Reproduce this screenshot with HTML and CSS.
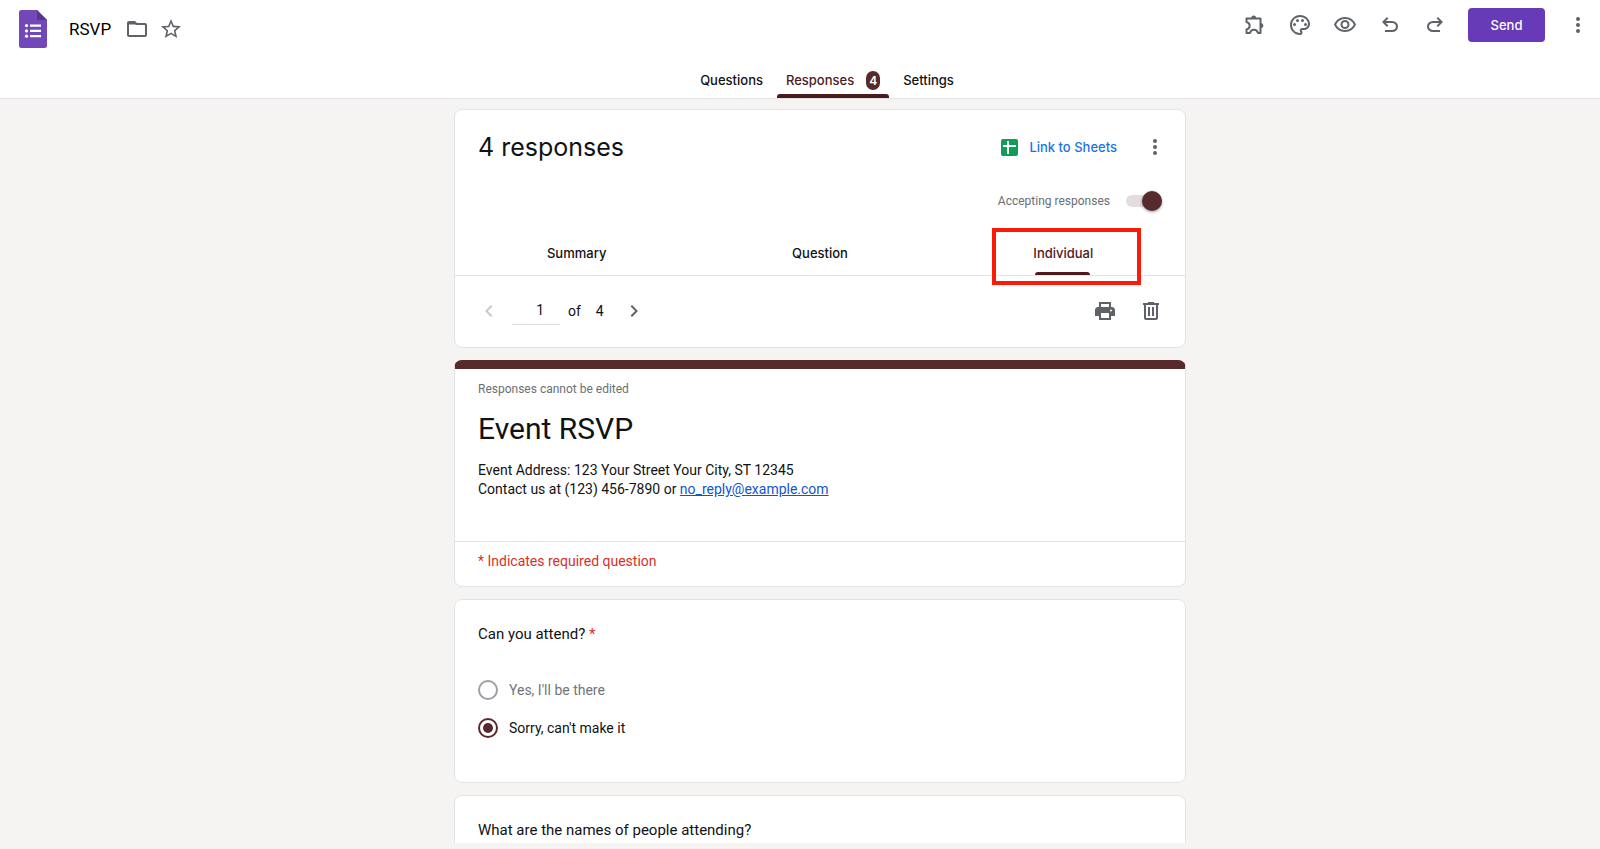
FILE: index.html
```html
<!DOCTYPE html>
<html lang="en">
<head>
<meta charset="utf-8">
<title>RSVP - Forms</title>
<link rel="stylesheet" href="styles.css">
</head>
<body>
<header class="topbar">
  <div class="topbar-row">
    <div class="file">
      <svg class="logo" viewBox="0 0 28 38" aria-hidden="true">
        <path fill="#7248b9" d="M2.500 0H18L28 10V35.500a2.500 2.500 0 0 1-2.500 2.500h-23A2.500 2.500 0 0 1 0 35.500v-33A2.500 2.500 0 0 1 2.500 0z"/>
        <path fill="#58358f" d="M18 0l10 10H18z"/>
        <path fill="#fff" d="M11 14.500h11v2.300H11zM11 19.800h11v2.300H11zM11 25h11v2.300H11z"/>
        <g fill="#fff"><circle cx="7.500" cy="15.600" r="1.600"/><circle cx="7.500" cy="20.900" r="1.600"/><circle cx="7.500" cy="26.200" r="1.600"/></g>
      </svg>
      <h1 class="file-name">RSVP</h1>
      <button class="icon-btn" aria-label="Move to folder"><svg class="icon" viewBox="0 0 24 24"><path d="M9.170 6l2 2H20v10H4V6h5.170M10 4H4c-1.100 0-1.990.900-1.990 2L2 18c0 1.100.900 2 2 2h16c1.100 0 2-.900 2-2V8c0-1.100-.900-2-2-2h-8l-2-2z"/><path d="M4 5h6l2 2.500H4z"/></svg></button>
      <button class="icon-btn" aria-label="Star"><svg class="icon" viewBox="0 0 24 24"><path d="M22 9.240l-7.190-.620L12 2 9.190 8.630 2 9.240l5.460 4.730L5.820 21 12 17.270 18.180 21l-1.630-7.030L22 9.240zM12 15.400l-3.760 2.270 1-4.280-3.320-2.880 4.380-.380L12 6.100l1.710 4.040 4.380.380-3.320 2.880 1 4.280L12 15.400z"/></svg></button>
    </div>
    <div class="actions">
      <button class="icon-btn" aria-label="Add-ons"><svg class="icon" viewBox="0 0 24 24"><path class="line" d="M4 5.500H17.500V20H15C14.500 18 13 16.800 11 16.800S7.500 18 7 20H3.500V16.500C5.500 16 6.700 14.700 6.700 12.700S5.500 9.500 3.500 9V5.500z"/><path d="M8.300 5a2.400 2.400 0 0 1 4.800 0zM18 10.300a2.400 2.400 0 0 1 0 4.800z"/></svg></button>
      <button class="icon-btn" aria-label="Customize theme"><svg class="icon mirrored" viewBox="0 0 24 24"><g transform="matrix(-1 0 0 1 24 0)"><path d="M12 22C6.490 22 2 17.510 2 12S6.490 2 12 2s10 4.040 10 9c0 3.310-2.690 6-6 6h-1.770c-.280 0-.500.220-.500.500 0 .120.050.230.130.330.410.470.640 1.060.640 1.670A2.500 2.500 0 0 1 12 22zm0-18c-4.410 0-8 3.590-8 8s3.590 8 8 8c.280 0 .500-.220.500-.500a.540.540 0 0 0-.140-.350c-.410-.460-.630-1.050-.630-1.650a2.500 2.500 0 0 1 2.500-2.500H16c2.210 0 4-1.790 4-4 0-3.860-3.590-7-8-7z"/><circle cx="6.500" cy="11.500" r="1.500"/><circle cx="9.500" cy="7.500" r="1.500"/><circle cx="14.500" cy="7.500" r="1.500"/><circle cx="17.500" cy="11.500" r="1.500"/></g></svg></button>
      <button class="icon-btn" aria-label="Preview"><svg class="icon" viewBox="0 0 24 24"><path d="M12 6a9.770 9.770 0 0 1 8.820 5.500C19.170 14.870 15.790 17 12 17s-7.170-2.130-8.820-5.500A9.770 9.770 0 0 1 12 6m0-2C7 4 2.730 7.110 1 11.500 2.730 15.890 7 19 12 19s9.270-3.110 11-7.500C21.270 7.110 17 4 12 4z"/><circle class="line" cx="12" cy="11.500" r="3.500"/></svg></button>
      <button class="icon-btn" aria-label="Undo"><svg class="icon" viewBox="0 0 24 24"><path d="M7 19v-2h7.100q1.575 0 2.738-1T18 13.500 16.838 11 14.100 10H7.800l2.600 2.600L9 14 4 9l5-5 1.400 1.400L7.800 8h6.300q2.425 0 4.163 1.575T20 13.500t-1.737 3.925T14.100 19z"/></svg></button>
      <button class="icon-btn" aria-label="Redo"><svg class="icon mirrored" viewBox="0 0 24 24"><path d="M7 19v-2h7.100q1.575 0 2.738-1T18 13.500 16.838 11 14.100 10H7.800l2.600 2.600L9 14 4 9l5-5 1.400 1.400L7.800 8h6.300q2.425 0 4.163 1.575T20 13.500t-1.737 3.925T14.100 19z"/></svg></button>
      <button class="send">Send</button>
      <button class="icon-btn" aria-label="More"><svg class="icon" viewBox="0 0 24 24"><circle cx="12" cy="6" r="2"/><circle cx="12" cy="12" r="2"/><circle cx="12" cy="18" r="2"/></svg></button>
    </div>
  </div>
  <nav class="tabs">
    <button class="tab">Questions</button>
    <button class="tab tab-active">Responses <span class="badge">4</span></button>
    <button class="tab">Settings</button>
  </nav>
</header>
<main class="page">
  <section class="card summary">
    <div class="summary-head">
      <h2 class="count">4 responses</h2>
      <div class="summary-actions">
        <button class="sheets"><svg class="sheets-icon" viewBox="0 0 17 17" aria-hidden="true"><rect width="17" height="17" rx="2" fill="#0f9d58"/><path fill="#fff" d="M2 6h4V2h2v4h7v2H8v7H6V8H2z"/></svg>Link to Sheets</button>
        <button class="icon-btn" aria-label="Response options"><svg class="icon" viewBox="0 0 24 24"><circle cx="12" cy="6" r="2"/><circle cx="12" cy="12" r="2"/><circle cx="12" cy="18" r="2"/></svg></button>
      </div>
    </div>
    <label class="accepting">Accepting responses <input class="switch" type="checkbox" role="switch" checked></label>
    <nav class="views">
      <button class="view">Summary</button>
      <button class="view">Question</button>
      <button class="view view-active">Individual<span class="highlight"></span></button>
    </nav>
    <div class="pager">
      <button class="icon-btn" aria-label="Previous response" disabled><svg class="icon faint" viewBox="0 0 24 24"><path d="M15.400 7.400L14 6l-6 6 6 6 1.400-1.400L10.800 12z"/></svg></button>
      <input class="page-input" type="text" value="1" aria-label="Response number">
      <span class="of">of</span><span>4</span>
      <button class="icon-btn next" aria-label="Next response"><svg class="icon mirrored" viewBox="0 0 24 24"><path d="M15.400 7.400L14 6l-6 6 6 6 1.400-1.400L10.800 12z"/></svg></button>
      <div class="pager-tools">
        <button class="icon-btn" aria-label="Print"><svg class="icon" viewBox="0 0 24 24"><path fill-rule="evenodd" d="M18 8V3H6v5H5c-1.660 0-3 1.340-3 3v6h4v4h12v-4h4v-6c0-1.660-1.340-3-3-3zM8 5h8v3H8zm8 14H8v-5h8zm2-6.500a1 1 0 1 1 0-2 1 1 0 0 1 0 2z"/></svg></button>
        <button class="icon-btn" aria-label="Delete"><svg class="icon" viewBox="0 0 24 24"><path fill-rule="evenodd" d="M15 4V3H9v1H4v2h1v13c0 1.100.900 2 2 2h10c1.100 0 2-.900 2-2V6h1V4zm2 15H7V6h10zM9 8h2v9H9zm4 0h2v9h-2z"/></svg></button>
      </div>
    </div>
  </section>

  <section class="card form-head">
    <div class="form-intro">
      <p class="note">Responses cannot be edited</p>
      <h2 class="form-title">Event RSVP</h2>
      <p class="description">Event Address: 123 Your Street Your City, ST 12345<br>Contact us at (123) 456-7890 or <a class="mail" href="mailto:no_reply@example.com">no_reply@example.com</a></p>
    </div>
    <p class="required-note">* Indicates required question</p>
  </section>

  <fieldset class="card question">
    <legend class="question-title">Can you attend? <span class="star">*</span></legend>
    <label class="choice muted"><input class="radio" type="radio" name="attend">Yes, I'll be there</label>
    <label class="choice"><input class="radio" type="radio" name="attend" checked>Sorry, can't make it</label>
  </fieldset>

  <section class="card question">
    <h3 class="question-title">What are the names of people attending?</h3>
    <p class="answer"></p>
  </section>
</main>
</body>
</html>
```
FILE: styles.css
```css
* { box-sizing: border-box; }

body {
  margin: 0;
  height: 100vh;
  display: flex;
  flex-direction: column;
  overflow: hidden;
  background: #f6f4f3;
  color: #111214;
  font-family: Roboto, "Liberation Sans", sans-serif;
  font-size: 14px;
}

h1, h2, h3, p { margin: 0; font-weight: 400; }

button {
  border: 0;
  padding: 0;
  background: none;
  color: inherit;
  font: inherit;
  cursor: pointer;
}

.icon-btn { display: flex; }
.icon { width: 24px; height: 24px; fill: #5f6368; }
.line { fill: none; stroke: #5f6368; stroke-width: 2; stroke-linejoin: round; }
.mirrored { transform: scaleX(-1); }
.faint { fill: #c8c9cb; }

/* Top bar */
.topbar {
  flex: none;
  background: #fff;
  border-bottom: 1px solid #e2e3e6;
}
.topbar-row {
  display: flex;
  justify-content: space-between;
  align-items: flex-start;
  height: 62px;
  padding: 8px 10px 0 19px;
}
.file { display: flex; align-items: center; gap: 10px; padding-top: 2px; }
.logo { width: 28px; height: 38px; margin-right: 12px; }
.file-name { font-size: 17px; line-height: 24px; color: #000; margin-right: 4px; }
.actions { display: flex; align-items: center; gap: 21px; }
.send {
  width: 77px;
  height: 34px;
  border-radius: 4px;
  background: #673ab7;
  color: #fff;
  font: 500 13px Inter, sans-serif;
}

.tabs {
  display: flex;
  justify-content: center;
  gap: 14px;
  padding-left: 54px;
  height: 36px;
}
.tab {
  position: relative;
  display: flex;
  align-items: center;
  font: 500 13px Inter, sans-serif;
}
.tab-active {
  gap: 12px;
  padding-left: 9px;
  padding-right: 9px;
  color: #4e1a1c;
}
.tab-active::after {
  content: "";
  position: absolute;
  left: 0;
  right: 0;
  bottom: 0;
  height: 4px;
  border-radius: 3px 3px 0 0;
  background: #4e1a1c;
}
.badge {
  padding: 0 3px;
  border-radius: 7px;
  background: #572a2b;
  color: #fff;
  font-size: 12px;
  font-weight: 600;
  line-height: 19px;
}

/* Cards */
.page {
  flex: 1;
  min-height: 0;
  overflow: hidden;
  display: flex;
  flex-direction: column;
  align-items: center;
  gap: 12px;
  margin-bottom: 6px;
  padding: 10px 0 0 40px;
}
.card {
  flex: none;
  width: 100%;
  max-width: 732px;
  margin: 0;
  border: 1px solid #e2e3e8;
  border-radius: 8px;
  background: #fff;
}

.summary-head {
  display: flex;
  justify-content: space-between;
  align-items: center;
  padding: 19px 18px 0 23px;
}
.count { font: 400 25px/36px Inter, sans-serif; }
.summary-actions { display: flex; align-items: center; gap: 26px; }
.sheets {
  display: flex;
  align-items: center;
  gap: 11px;
  color: #1a73e8;
  font: 500 13px Inter, sans-serif;
}
.sheets-icon { width: 17px; height: 17px; }

.accepting {
  display: flex;
  justify-content: flex-end;
  align-items: center;
  gap: 16px;
  margin-top: 26px;
  padding-right: 23px;
  height: 20px;
  color: #6b6f74;
  font-size: 12px;
}
.switch {
  appearance: none;
  position: relative;
  width: 36px;
  height: 12px;
  margin: 0;
  border-radius: 6px;
  background: #e5dddd;
}
.switch::after {
  content: "";
  position: absolute;
  right: 0;
  top: -4px;
  width: 20px;
  height: 20px;
  border-radius: 50%;
  background: #572a2b;
  box-shadow: 0 1px 3px rgba(0, 0, 0, .4);
}

.views {
  display: grid;
  grid-template-columns: repeat(3, 1fr);
  margin-top: 20px;
  height: 45px;
  border-bottom: 1px solid #e2e3e6;
}
.view { position: relative; font: 500 13px Inter, sans-serif; }
.view-active { color: #4e1a1c; }
.view-active::after {
  content: "";
  position: absolute;
  left: 50%;
  bottom: 0;
  width: 55px;
  height: 3px;
  margin-left: -28px;
  border-radius: 3px 3px 0 0;
  background: #4e1a1c;
}
.highlight {
  position: absolute;
  inset: -3px 44px -10px 50px;
  border: 4px solid #fb1b08;
}

.pager {
  display: flex;
  align-items: center;
  height: 71px;
  padding: 0 22px 2px;
}
.page-input {
  width: 48px;
  height: 28px;
  margin: 0 8px 0 11px;
  padding: 0 16px 0 0;
  border: 0;
  border-bottom: 1px solid #dadce0;
  background: none;
  color: inherit;
  font: inherit;
  text-align: right;
}
.of { margin-right: 15px; }
.next { margin-left: 18px; }
.pager-tools { display: flex; gap: 22px; margin-left: auto; }

.form-head { border-top: 9px solid #572a2b; }
.form-intro { padding: 12px 23px 42px; border-bottom: 1px solid #e2e3e6; }
.note { font-size: 12px; line-height: 16px; color: #6b6f74; }
.form-title { margin-top: 12px; font-size: 30px; line-height: 40px; }
.description { margin-top: 12px; font-size: 14px; line-height: 19px; }
.mail { color: #1155cc; }
.required-note {
  padding: 9px 23px 15px;
  font-size: 14px;
  line-height: 20px;
  color: #d93025;
}

.question { padding: 23px 23px 35px; }
.question-title { font-size: 15px; line-height: 22px; }
legend.question-title { float: left; width: 100%; padding: 0; margin-bottom: 26px; }
.star { color: #d93025; }
.choice {
  clear: both;
  display: flex;
  align-items: center;
  gap: 11px;
  height: 38px;
}
.muted { color: #70757a; }
.radio {
  appearance: none;
  display: grid;
  place-items: center;
  width: 20px;
  height: 20px;
  margin: 0;
  border: 2px solid #9aa0a6;
  border-radius: 50%;
}
.radio:checked { border-color: #572a2b; }
.radio:checked::after {
  content: "";
  width: 10px;
  height: 10px;
  border-radius: 50%;
  background: #572a2b;
}
.answer { min-height: 40px; }
```
